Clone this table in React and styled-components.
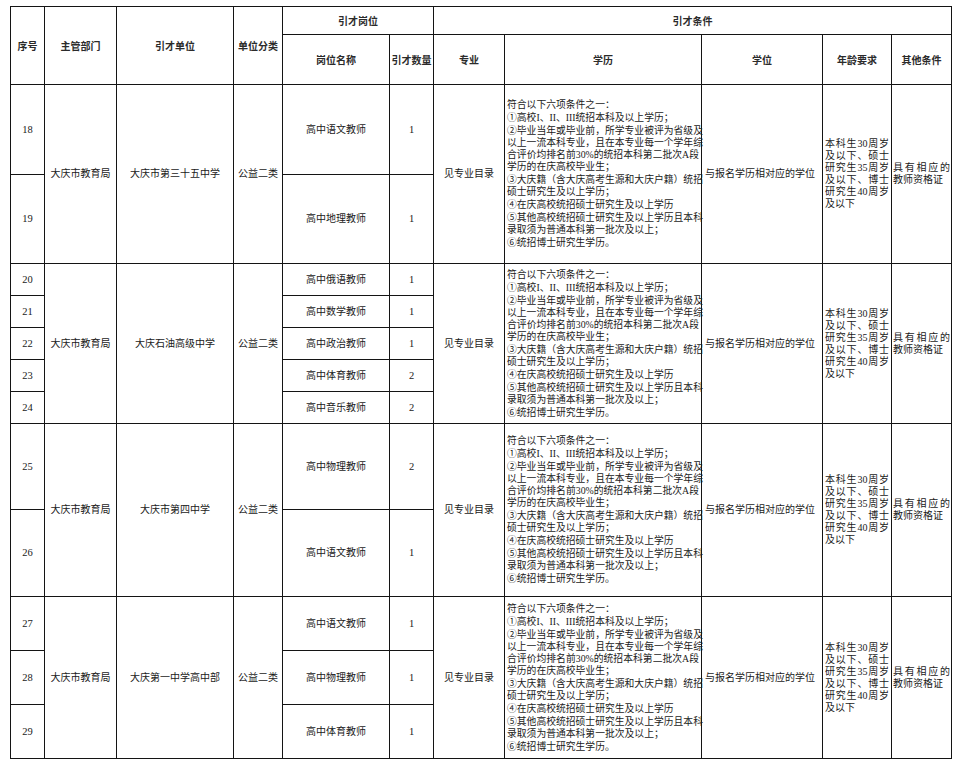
import React from "react";
import styled, { createGlobalStyle } from "styled-components";

const GlobalStyle = createGlobalStyle`
  html, body {
    margin: 0;
    padding: 0;
    background: #ffffff;
  }
`;

const Page = styled.div`
  padding: 6px 0 0 10px;
  background: #ffffff;
`;

const Table = styled.table`
  border-collapse: collapse;
  table-layout: fixed;
  width: 941px;
  font-family: "Liberation Serif", "Noto Sans CJK SC", serif;
  font-size: 10px;
  color: #1a1a1a;
`;

const HeadRow = styled.tr`
  height: ${(p) => p.$h}px;
`;

const HeadCell = styled.th`
  border: 1px solid #141414;
  padding: 0;
  font-family: "Noto Sans CJK SC", sans-serif;
  font-size: 10px;
  font-weight: 700;
  color: #2b2b2b;
  text-align: center;
  vertical-align: middle;
`;

const Row = styled.tr`
  height: ${(p) => p.$h}px;
`;

const Cell = styled.td`
  border: 1px solid #141414;
  padding: 0 ${(p) => p.$pad || 0}px;
  text-align: ${(p) => p.$align || "center"};
  vertical-align: middle;
  line-height: 12px;
  overflow: visible;
`;

const NumCell = styled(Cell)`
  font-size: 10.5px;
`;

const TextBlock = styled.div`
  font-size: ${(p) => p.$size || 10}px;
  line-height: ${(p) => p.$lh || 12}px;
`;

const Line = styled.div`
  white-space: nowrap;
  text-align: ${(p) => (p.$full ? "justify" : "left")};
  text-align-last: ${(p) => (p.$full ? "justify" : "left")};
`;

const Mark = styled.span`
  font-family: "Noto Sans CJK SC", sans-serif;
`;

const colWidths = [34, 72, 117, 49, 107, 44, 71, 197, 121, 69, 60];

const eduLines = [
  { t: "符合以下六项条件之一：" },
  { m: "①", t: "高校I、II、III统招本科及以上学历；" },
  { m: "②", t: "毕业当年或毕业前，所学专业被评为省级及", full: true },
  { t: "以上一流本科专业，且在本专业每一个学年综", full: true },
  { t: "合评价均排名前30%的统招本科第二批次A段", full: true },
  { t: "学历的在庆高校毕业生；" },
  { m: "③", t: "大庆籍（含大庆高考生源和大庆户籍）统招", full: true },
  { t: "硕士研究生及以上学历；" },
  { m: "④", t: "在庆高校统招硕士研究生及以上学历" },
  { m: "⑤", t: "其他高校统招硕士研究生及以上学历且本科", full: true },
  { t: "录取须为普通本科第一批次及以上；" },
  { m: "⑥", t: "统招博士研究生学历。" },
];

const ageLines = [
  { t: "本科生30周岁", full: true },
  { t: "及以下、硕士", full: true },
  { t: "研究生35周岁", full: true },
  { t: "及以下、博士", full: true },
  { t: "研究生40周岁", full: true },
  { t: "及以下" },
];

const otherLines = [{ t: "具有相应的", full: true }, { t: "教师资格证" }];

const groups = [
  {
    unit: "大庆市第三十五中学",
    rows: [
      { no: 18, post: "高中语文教师", count: 1, h: 90 },
      { no: 19, post: "高中地理教师", count: 1, h: 89 },
    ],
  },
  {
    unit: "大庆石油高级中学",
    rows: [
      { no: 20, post: "高中俄语教师", count: 1, h: 32 },
      { no: 21, post: "高中数学教师", count: 1, h: 32 },
      { no: 22, post: "高中政治教师", count: 1, h: 32 },
      { no: 23, post: "高中体育教师", count: 2, h: 32 },
      { no: 24, post: "高中音乐教师", count: 2, h: 32 },
    ],
  },
  {
    unit: "大庆市第四中学",
    rows: [
      { no: 25, post: "高中物理教师", count: 2, h: 86 },
      { no: 26, post: "高中语文教师", count: 1, h: 87 },
    ],
  },
  {
    unit: "大庆第一中学高中部",
    rows: [
      { no: 27, post: "高中语文教师", count: 1, h: 54 },
      { no: 28, post: "高中物理教师", count: 1, h: 54 },
      { no: 29, post: "高中体育教师", count: 1, h: 54 },
    ],
  },
];

function Lines({ items, size, lh }) {
  return (
    <TextBlock $size={size} $lh={lh}>
      {items.map((l, i) => (
        <Line key={i} $full={l.full}>
          {l.m && <Mark>{l.m}</Mark>}
          {l.t}
        </Line>
      ))}
    </TextBlock>
  );
}

function Group({ group }) {
  const span = group.rows.length;
  return group.rows.map((r, i) => (
    <Row key={r.no} $h={r.h}>
      <NumCell>{r.no}</NumCell>
      {i === 0 && (
        <>
          <Cell rowSpan={span}>大庆市教育局</Cell>
          <Cell rowSpan={span}>{group.unit}</Cell>
          <Cell rowSpan={span}>公益二类</Cell>
        </>
      )}
      <Cell>{r.post}</Cell>
      <NumCell>{r.count}</NumCell>
      {i === 0 && (
        <>
          <Cell rowSpan={span}>见专业目录</Cell>
          <Cell rowSpan={span} $align="left" $pad={2}>
            <Lines items={eduLines} size={9.8} lh={12} />
          </Cell>
          <Cell rowSpan={span} $align="left" $pad={3}>
            与报名学历相对应的学位
          </Cell>
          <Cell rowSpan={span} $align="left" $pad={2}>
            <Lines items={ageLines} />
          </Cell>
          <Cell rowSpan={span} $align="left" $pad={1}>
            <Lines items={otherLines} />
          </Cell>
        </>
      )}
    </Row>
  ));
}

export default function App() {
  return (
    <Page>
      <GlobalStyle />
      <Table>
        <colgroup>
          {colWidths.map((w, i) => (
            <col key={i} style={{ width: w }} />
          ))}
        </colgroup>
        <thead>
          <HeadRow $h={28}>
            <HeadCell rowSpan={2}>序号</HeadCell>
            <HeadCell rowSpan={2}>主管部门</HeadCell>
            <HeadCell rowSpan={2}>引才单位</HeadCell>
            <HeadCell rowSpan={2}>单位分类</HeadCell>
            <HeadCell colSpan={2}>引才岗位</HeadCell>
            <HeadCell colSpan={5}>引才条件</HeadCell>
          </HeadRow>
          <HeadRow $h={50}>
            <HeadCell>岗位名称</HeadCell>
            <HeadCell>引才数量</HeadCell>
            <HeadCell>专业</HeadCell>
            <HeadCell>学历</HeadCell>
            <HeadCell>学位</HeadCell>
            <HeadCell>年龄要求</HeadCell>
            <HeadCell>其他条件</HeadCell>
          </HeadRow>
        </thead>
        <tbody>
          {groups.map((g) => (
            <Group key={g.unit} group={g} />
          ))}
        </tbody>
      </Table>
    </Page>
  );
}
